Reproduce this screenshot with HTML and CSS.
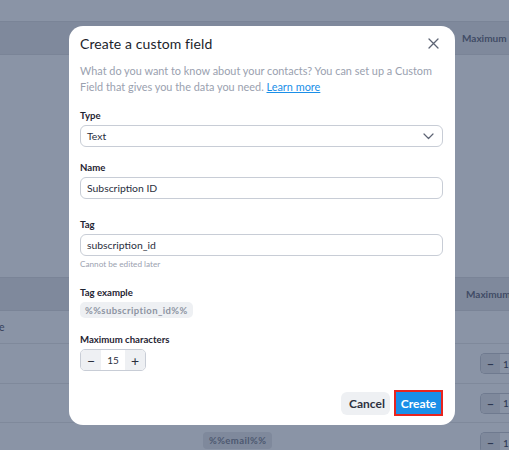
FILE: index.html
```html
<!DOCTYPE html>
<html>
<head>
<meta charset="utf-8">
<link rel="stylesheet" href="styles.css">
</head>
<body>
<div class="page">
  <div class="topbar"></div>
  <div class="thead thead-top"><span class="th-label">Maximum</span></div>
  <div class="spacer"></div>
  <div class="thead thead-low"><span class="th-label">Maximum</span></div>
  <div class="row row-1"><span class="cell-text">e</span></div>
  <div class="row row-2"><div class="bg-stepper"><span class="bg-minus">−</span><span class="bg-val">1</span></div></div>
  <div class="row row-3"><div class="bg-stepper"><span class="bg-minus">−</span><span class="bg-val">1</span></div></div>
  <div class="row row-4"><span class="bg-chip">%%email%%</span><div class="bg-stepper"><span class="bg-minus">−</span><span class="bg-val">1</span></div></div>
</div>

<div class="modal">
  <div class="modal-head">
    <h2 class="title">Create a custom field</h2>
    <svg class="close" width="11" height="11" viewBox="0 0 11 11"><path d="M1 1L10 10M10 1L1 10" stroke="#5d6474" stroke-width="1.3" fill="none" stroke-linecap="round"/></svg>
  </div>
  <p class="desc">What do you want to know about your contacts? You can set up a Custom Field that gives you the data you need. <a class="link">Learn more</a></p>

  <div class="field f-type">
    <div class="label">Type</div>
    <div class="input select"><span>Text</span>
      <svg width="11" height="7" viewBox="0 0 11 7"><path d="M1 1L5.5 5.5L10 1" stroke="#5d6474" stroke-width="1.2" fill="none" stroke-linecap="round" stroke-linejoin="round"/></svg>
    </div>
  </div>

  <div class="field f-name">
    <div class="label">Name</div>
    <div class="input">Subscription ID</div>
  </div>

  <div class="field f-tag">
    <div class="label">Tag</div>
    <div class="input">subscription_id</div>
    <div class="help">Cannot be edited later</div>
  </div>

  <div class="field f-example">
    <div class="label">Tag example</div>
    <span class="chip">%%subscription_id%%</span>
  </div>

  <div class="field f-max">
    <div class="label">Maximum characters</div>
    <div class="stepper"><span class="st-btn">−</span><span class="st-val">15</span><span class="st-btn">+</span></div>
  </div>

  <div class="actions">
    <button class="btn cancel">Cancel</button>
    <button class="btn create">Create</button>
  </div>
</div>
</body>
</html>
```

FILE: styles.css
```css
* { box-sizing: border-box; }
html, body { margin: 0; padding: 0; }
body {
  width: 509px;
  height: 450px;
  overflow: hidden;
  background: #8a94a6;
  font-family: "Lato", "Open Sans", sans-serif;
  position: relative;
}
.page { display: flex; flex-direction: column; }
.topbar { height: 21px; background: #8a94a6; }
.thead {
  height: 34px;
  background: #7f899c;
  border-top: 1px solid #7a8497;
  border-bottom: 1px solid #7a8497;
  display: flex;
  align-items: center;
  justify-content: flex-end;
}
.th-label {
  font-size: 10px;
  font-weight: 700;
  color: #414c66;
  width: 47px;
  overflow: hidden;
  white-space: nowrap;
}
.thead-low .th-label { width: 43px; }
.spacer { height: 222px; }
.row {
  border-bottom: 1px solid #7f899b;
  display: flex;
  align-items: center;
  position: relative;
}
.row-1 { height: 33px; }
.row-2 { height: 40px; justify-content: flex-end; }
.row-3 { height: 39px; justify-content: flex-end; }
.row-4 { height: 40px; justify-content: flex-end; }
.cell-text { font-size: 10.5px; color: #38425c; margin-left: -1px; }
.bg-stepper {
  width: 29px;
  height: 21px;
  border: 1px solid #6f7a8f;
  border-right: none;
  border-radius: 5px 0 0 5px;
  display: flex;
  overflow: hidden;
}
.bg-minus { width: 19px; background: #7f899c; color: #2c3650; font-size: 12px; display: flex; align-items: center; justify-content: center; font-weight: 700; }
.bg-val { flex: 1; background: #8a94a6; font-size: 10px; color: #2c3650; display: flex; align-items: center; padding-left: 3px; }
.row-4 { align-items: flex-start; padding-top: 9px; }
.bg-chip {
  position: absolute;
  left: 203px;
  top: 9px;
  height: 17px;
  padding: 0 6px;
  background: #7f899c;
  border-radius: 4px;
  font-size: 9.5px;
  font-weight: 700;
  letter-spacing: 0.4px;
  color: #4d5870;
  display: flex;
  align-items: center;
}

.modal {
  position: absolute;
  left: 69px;
  top: 26px;
  width: 386px;
  height: 399px;
  background: #fff;
  border-radius: 14px;
  padding: 8px 12px 0 11px;
  display: flex;
  flex-direction: column;
}
.modal-head { display: flex; align-items: center; justify-content: space-between; height: 20px; }
.title { margin: 0; font-size: 14px; font-weight: 400; color: #1b1e2b; line-height: 20px; letter-spacing: 0.1px; }
.close { margin-right: 4px; margin-top: -2px; }
.desc {
  margin: 9px 0 0;
  font-size: 10.9px;
  line-height: 16px;
  color: #9aa1af;
}
.link { color: #1a8fe8; text-decoration: underline; }
.field { display: flex; flex-direction: column; align-items: flex-start; }
.label { font-size: 9.6px; font-weight: 700; color: #1f2433; line-height: 14px; margin-bottom: 2px; }
.f-type { margin-top: 14px; }
.f-name { margin-top: 14px; }
.f-tag { margin-top: 19px; }
.f-example { margin-top: 16px; }
.f-max { margin-top: 15px; }
.input {
  width: 100%;
  height: 22px;
  border: 1px solid #c8cdd6;
  border-radius: 6px;
  display: flex;
  align-items: center;
  padding: 0 6px;
  font-size: 10.4px;
  color: #2a2f3d;
}
.select { justify-content: space-between; padding-right: 8px; }
.help { font-size: 8.2px; color: #9ba2b0; line-height: 12px; margin-top: 2px; }
.chip {
  height: 16px;
  padding: 0 5px;
  background: #eef0f3;
  border-radius: 5px;
  font-size: 9.5px;
  font-weight: 700;
  letter-spacing: 0.4px;
  color: #8d94a2;
  display: flex;
  align-items: center;
}
.stepper {
  width: 66px;
  height: 22px;
  border: 1px solid #c8cdd6;
  border-radius: 5px;
  display: flex;
  overflow: hidden;
}
.st-btn {
  width: 20px;
  background: #eef0f3;
  display: flex;
  align-items: center;
  justify-content: center;
  font-size: 14px;
  color: #2a2f3d;
}
.st-val {
  flex: 1;
  display: flex;
  align-items: center;
  justify-content: center;
  font-size: 10px;
  color: #2a2f3d;
}
.actions {
  margin-top: auto;
  margin-bottom: 9px;
  display: flex;
  justify-content: flex-end;
  align-items: center;
  gap: 4px;
}
.btn {
  font-family: inherit;
  border: none;
  border-radius: 6px;
  font-size: 12px;
  font-weight: 700;
  height: 23px;
  padding: 0 8px;
}
.cancel { background: #eef0f3; color: #2d3240; width: 49px; }
.create {
  background: #1a8fe8;
  color: #fff;
  width: 49px;
  height: 26px;
  border-radius: 0;
  border: 2px solid #e8251f;
  padding: 0;
}
```
